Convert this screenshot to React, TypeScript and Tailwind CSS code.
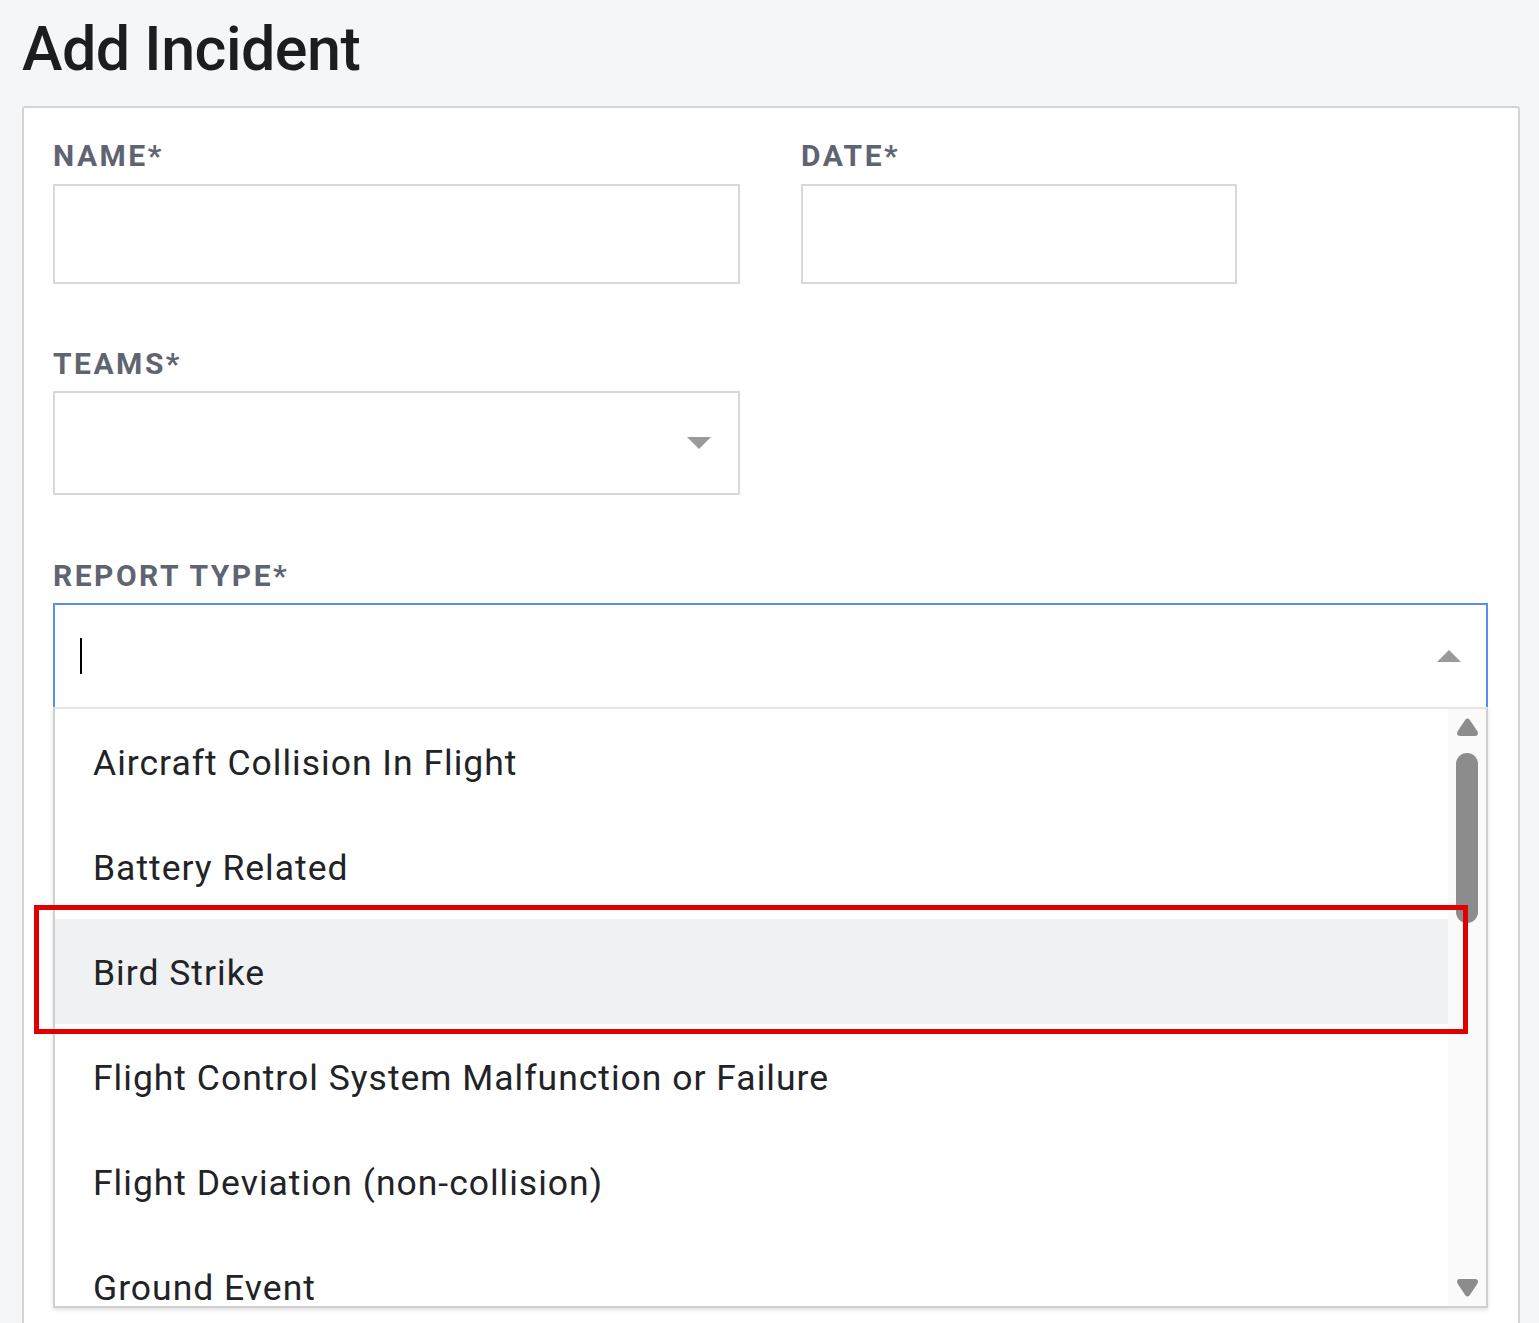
import React from 'react';

const font = { fontFamily: 'Roboto, "Liberation Sans", sans-serif' };

const reportTypes = [
  'Aircraft Collision In Flight',
  'Battery Related',
  'Bird Strike',
  'Flight Control System Malfunction or Failure',
  'Flight Deviation (non-collision)',
  'Ground Event',
];

const Label: React.FC<{ text: string }> = ({ text }) => (
  <div className="text-[30px] leading-[36px] font-bold tracking-[2.5px] text-[#5f6472]">{text}</div>
);

const Caret: React.FC<{ up?: boolean }> = ({ up }) => (
  <svg width="24" height="12" viewBox="0 0 24 12" className="shrink-0">
    <path d={up ? 'M0 12 L12 0 L24 12 Z' : 'M0 0 L24 0 L12 12 Z'} fill="#9a9a9a" />
  </svg>
);

const ScrollArrow: React.FC<{ up?: boolean }> = ({ up }) => (
  <svg width="23" height="18" viewBox="0 0 23 18">
    <path
      d={up ? 'M9.5 1.5 Q11.5 -0.5 13.5 1.5 L21.5 13.5 Q23 18 19 18 L4 18 Q0 18 1.5 13.5 Z' : 'M9.5 16.5 Q11.5 18.5 13.5 16.5 L21.5 4.5 Q23 0 19 0 L4 0 Q0 0 1.5 4.5 Z'}
      fill="#8c8c8c"
    />
  </svg>
);

export default function App() {
  return (
    <div className="min-h-screen bg-[#f5f6f8] pl-[22px] pr-[19px] pt-[19px]" style={font}>
      <h1 className="text-[61px] leading-[60px] font-medium tracking-[-0.5px] text-[#1c1d21]">Add Incident</h1>
      <div className="mt-[27px] bg-white border-2 border-[#d4d4d4] rounded-[3px] pl-[29px] pr-[30px] pt-[30px] pb-[40px]">
        <div className="flex gap-[61px]">
          <div className="w-[687px]">
            <Label text="NAME*" />
            <div className="mt-[10px] h-[100px] border-2 border-[#d8d8d8] bg-white" />
          </div>
          <div className="w-[436px]">
            <Label text="DATE*" />
            <div className="mt-[10px] h-[100px] border-2 border-[#d8d8d8] bg-white" />
          </div>
        </div>

        <div className="mt-[62px] w-[687px]">
          <Label text="TEAMS*" />
          <div className="mt-[9px] h-[104px] border-2 border-[#d8d8d8] bg-white flex items-center justify-end pr-[27px]">
            <Caret />
          </div>
        </div>

        <div className="mt-[63px]">
          <Label text="REPORT TYPE*" />
          <div className="mt-[9px] h-[104px] border-2 border-b-0 border-[#5b8def] bg-white flex items-center justify-between pl-[25px] pr-[25px]">
            <div className="w-[2px] h-[36px] bg-black" />
            <Caret up />
          </div>
          <div className="relative">
            <div className="h-[601px] border-2 border-[#d0d0d0] border-t-[#e6e6e6] bg-white shadow-[0_2px_4px_rgba(0,0,0,0.12)] flex overflow-hidden">
              <div className="flex-1">
                {reportTypes.map((t) => (
                  <div
                    key={t}
                    className={`h-[105px] flex items-center pl-[38px] pt-[4px] text-[35.5px] tracking-[1px] text-[#222326] ${t === 'Bird Strike' ? 'bg-[#f0f1f3]' : ''}`}
                  >
                    {t}
                  </div>
                ))}
              </div>
              <div className="w-[38px] bg-[#fafafa] flex flex-col items-center pt-[9px] pb-[9px]">
                <ScrollArrow up />
                <div className="mt-[17px] w-[22px] h-[170px] rounded-full bg-[#8c8c8c]" />
                <div className="flex-1" />
                <ScrollArrow />
              </div>
            </div>
            <div className="absolute left-[-19px] top-[198px] w-[1434px] h-[129px] border-[5px] border-[#e00000] pointer-events-none" />
          </div>
        </div>
      </div>
    </div>
  );
}
